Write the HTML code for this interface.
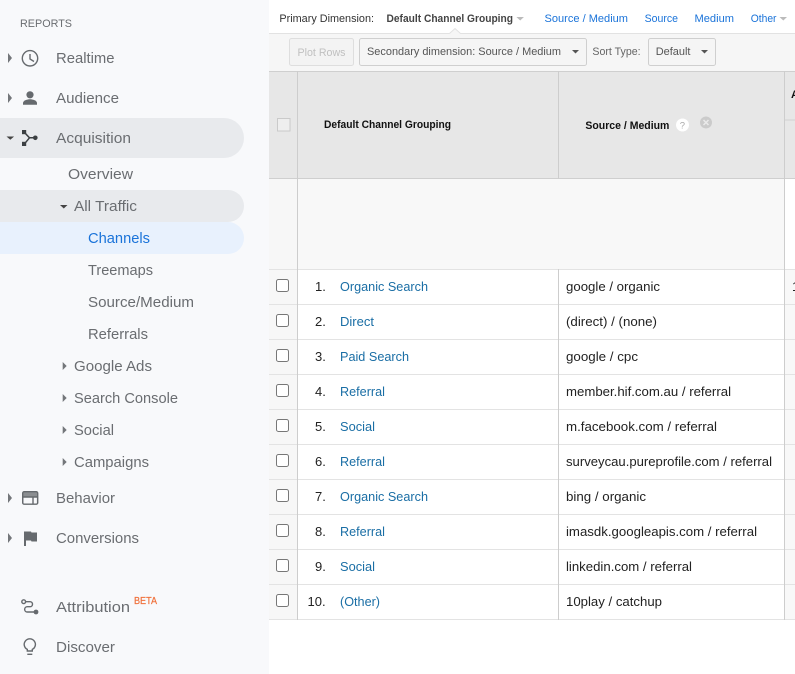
<!DOCTYPE html>
<html>
<head>
<meta charset="utf-8">
<style>
html,body{margin:0;padding:0;background:#fff;width:795px;height:674px;overflow:hidden}
svg{display:block}
text{font-family:"Liberation Sans",sans-serif}
.n{font-size:15px;fill:#6a6d71}
.t{font-size:13px;fill:#222}
.l{font-size:13px;fill:#1a6ea5}
.b{font-size:11px;fill:#111;font-weight:bold}
.d{font-size:11px;fill:#1a73d9}
.s{font-size:11px;fill:#666}
</style>
</head>
<body>
<svg width="795" height="674" viewBox="0 0 795 674" xmlns="http://www.w3.org/2000/svg">
<rect width="795" height="674" fill="#fff"/>
<!-- sidebar -->
<rect width="269" height="674" fill="#f8f9fb"/>
<path d="M0 118H224a20 20 0 0 1 0 40H0z" fill="#e8eaed"/>
<path d="M0 190H228a16 16 0 0 1 0 32H0z" fill="#e8eaed"/>
<path d="M0 222H228a16 16 0 0 1 0 32H0z" fill="#e8f1fd"/>
<text x="20" y="27" font-size="11" fill="#6a6d71" textLength="52" lengthAdjust="spacingAndGlyphs">REPORTS</text>
<text class="n" x="56" y="63" textLength="58.5" lengthAdjust="spacingAndGlyphs">Realtime</text>
<text class="n" x="56" y="103" textLength="63" lengthAdjust="spacingAndGlyphs">Audience</text>
<text class="n" x="56" y="143" textLength="75" lengthAdjust="spacingAndGlyphs">Acquisition</text>
<text class="n" x="68" y="179" textLength="65" lengthAdjust="spacingAndGlyphs">Overview</text>
<text class="n" x="74" y="211" textLength="63" lengthAdjust="spacingAndGlyphs">All Traffic</text>
<text class="n" x="88" y="243" textLength="62" lengthAdjust="spacingAndGlyphs" style="fill:#1a73d9">Channels</text>
<text class="n" x="88" y="275" textLength="65" lengthAdjust="spacingAndGlyphs">Treemaps</text>
<text class="n" x="88" y="307" textLength="106" lengthAdjust="spacingAndGlyphs">Source/Medium</text>
<text class="n" x="88" y="339" textLength="60" lengthAdjust="spacingAndGlyphs">Referrals</text>
<text class="n" x="74" y="371" textLength="78" lengthAdjust="spacingAndGlyphs">Google Ads</text>
<text class="n" x="74" y="403" textLength="104" lengthAdjust="spacingAndGlyphs">Search Console</text>
<text class="n" x="74" y="435" textLength="40" lengthAdjust="spacingAndGlyphs">Social</text>
<text class="n" x="74" y="467" textLength="75" lengthAdjust="spacingAndGlyphs">Campaigns</text>
<text class="n" x="56" y="503" textLength="59" lengthAdjust="spacingAndGlyphs">Behavior</text>
<text class="n" x="56" y="543" textLength="83" lengthAdjust="spacingAndGlyphs">Conversions</text>
<text class="n" x="56" y="612" textLength="74" lengthAdjust="spacingAndGlyphs">Attribution</text>
<text x="134" y="604" font-size="10" fill="#f0703a" stroke="#f0703a" stroke-width=".2" textLength="23" lengthAdjust="spacingAndGlyphs">BETA</text>
<text class="n" x="56" y="652" textLength="59" lengthAdjust="spacingAndGlyphs">Discover</text>
<!-- sidebar carets -->
<g fill="#73767a">
<path d="M8 53l4 5-4 5z"/><path d="M8 93l4 5-4 5z"/>
<path d="M8 493l4 5-4 5z"/><path d="M8 533l4 5-4 5z"/>
<path d="M62.700 362l4 4-4 4z"/><path d="M62.700 394l4 4-4 4z"/><path d="M62.700 426l4 4-4 4z"/><path d="M62.700 458l4 4-4 4z"/>
</g>
<g fill="#444">
<path d="M6.500 136.500h7.600l-3.800 3.300z"/><path d="M60 205h7.500l-3.700 3.500z"/>
</g>
<!-- clock -->
<g fill="none" stroke="#666a6e" stroke-width="1.400">
<circle cx="30" cy="58.300" r="7.700"/><path d="M30 54V59L34 61.500"/>
</g>
<!-- person -->
<g fill="#666a6e"><circle cx="30" cy="94.800" r="3.600"/><path d="M23 104.700v-1.700c0-2.500 4.600-3.700 7-3.700s7 1.200 7 3.700v1.700z"/></g>
<!-- acquisition -->
<g fill="#3c4043"><rect x="22" y="130" width="4.200" height="4.200"/><rect x="22" y="141.800" width="4.200" height="4.200"/><circle cx="35.300" cy="137.800" r="2.300"/></g>
<path d="M24.500 132.500l5 5.300-5 6M29.500 137.800H35" fill="none" stroke="#3c4043" stroke-width="1.500"/>
<!-- behavior -->
<rect x="22.700" y="491.700" width="15" height="12.500" rx="1.500" fill="#8b8e91"/>
<rect x="23.500" y="497.200" width="13.400" height="6.300" fill="#f8f9fb"/>
<g fill="none" stroke="#666a6e" stroke-width="1.400"><rect x="22.700" y="491.700" width="15" height="12.500" rx="1.500"/><path d="M23 497H37.500M33 497V504"/></g>
<!-- flag -->
<path d="M24 531.500h7l.5 1H37v9h-5.500l-.5-1H26V546h-2z" fill="#666a6e"/>
<!-- attribution -->
<g fill="none" stroke="#666a6e" stroke-width="1.400">
<circle cx="23.700" cy="601.700" r="1.900"/>
<path d="M25.700 601.700h4.300a2.500 2.500 0 0 1 0 5h-2.700a2.600 2.600 0 0 0 0 5.300h7"/>
</g>
<circle cx="36" cy="612" r="2.400" fill="#666a6e"/>
<!-- bulb -->
<g fill="none" stroke="#666a6e" stroke-width="1.400">
<path d="M27.300 651v-1.600a5.600 5.600 0 1 1 5 0v1.600z"/>
<path d="M27.300 654.300h5"/>
</g>
<!-- top bar -->
<text x="279.400" y="22" font-size="11" fill="#333" textLength="94.600" lengthAdjust="spacingAndGlyphs">Primary Dimension:</text>
<text x="386.500" y="22" font-size="11" font-weight="bold" fill="#444" textLength="126.500" lengthAdjust="spacingAndGlyphs">Default Channel Grouping</text>
<path d="M516.400 17h7.500l-3.700 3.500z" fill="#bbb"/>
<text class="d" x="544.500" y="22" textLength="83.500" lengthAdjust="spacingAndGlyphs">Source / Medium</text>
<text class="d" x="644.600" y="22" textLength="33.400" lengthAdjust="spacingAndGlyphs">Source</text>
<text class="d" x="694.500" y="22" textLength="39.500" lengthAdjust="spacingAndGlyphs">Medium</text>
<text class="d" x="750.700" y="22" textLength="25.800" lengthAdjust="spacingAndGlyphs">Other</text>
<path d="M779.500 17h7.500l-3.700 3.500z" fill="#bbb"/>
<!-- toolbar -->
<rect x="269" y="33" width="526" height="38" fill="#f6f6f6"/>
<rect x="269" y="33" width="526" height="1" fill="#e2e2e2"/>
<path d="M449.500 34l5.500-5.500 5.500 5.500z" fill="#f6f6f6"/>
<path d="M449.500 33.500l5.500-5 5.500 5" fill="none" stroke="#e2e2e2"/>
<rect x="289.500" y="38.500" width="64" height="27" rx="2" fill="#f3f3f3" stroke="#dedede"/>
<text x="297.500" y="56" font-size="11" fill="#c0c0c0" textLength="48" lengthAdjust="spacingAndGlyphs">Plot Rows</text>
<rect x="359.500" y="38.500" width="227" height="27" rx="2" fill="#f5f5f5" stroke="#cfcfcf"/>
<text class="s" x="367" y="55" textLength="194" lengthAdjust="spacingAndGlyphs" style="fill:#555">Secondary dimension: Source / Medium</text>
<path d="M572 50h7l-3.500 3.500z" fill="#555"/>
<text class="s" x="592.400" y="55" textLength="48.200" lengthAdjust="spacingAndGlyphs">Sort Type:</text>
<rect x="648.500" y="38.500" width="67" height="27" rx="2" fill="#f5f5f5" stroke="#cfcfcf"/>
<text class="s" x="655.700" y="55" textLength="34.800" lengthAdjust="spacingAndGlyphs" style="fill:#555">Default</text>
<path d="M701 50h7l-3.500 3.500z" fill="#555"/>
<!-- table header -->
<rect x="269" y="71" width="526" height="108" fill="#e7e7e7"/>
<rect x="269" y="71" width="526" height="1" fill="#cfcfcf"/>
<rect x="269" y="178" width="526" height="1" fill="#cfcfcf"/>
<rect x="277.500" y="118.500" width="12.500" height="12.500" fill="#eeeeee" stroke="#cacaca"/>
<text class="b" x="324" y="128" textLength="127" lengthAdjust="spacingAndGlyphs">Default Channel Grouping</text>
<text class="b" x="585.400" y="129" textLength="84" lengthAdjust="spacingAndGlyphs">Source / Medium</text>
<circle cx="682.500" cy="125" r="6.500" fill="#fff"/>
<text x="679.800" y="128.500" font-size="9.500" fill="#aaa">?</text>
<circle cx="706" cy="122.500" r="6" fill="#cbcbcb"/>
<path d="M703.500 120l5 5M708.500 120l-5 5" stroke="#eaeaea" stroke-width="1.500"/>
<text x="791" y="98" font-size="11" font-weight="bold" fill="#111">A</text>
<rect x="785" y="119.500" width="10" height="1" fill="#d0d0d0"/>
<!-- summary row -->
<rect x="298" y="179" width="486" height="90" fill="#f8f8f8"/>
<rect x="269" y="179" width="28" height="90" fill="#f7f7f7"/>
<!-- check column / right column tint -->
<rect x="269" y="270" width="28" height="350" fill="#f7f7f7"/>
<rect x="785" y="270" width="10" height="350" fill="#f8f8f8"/>
<g fill="#e3e3e3">
<rect x="269" y="269" width="526" height="1"/><rect x="269" y="304" width="526" height="1"/><rect x="269" y="339" width="526" height="1"/><rect x="269" y="374" width="526" height="1"/><rect x="269" y="409" width="526" height="1"/><rect x="269" y="444" width="526" height="1"/><rect x="269" y="479" width="526" height="1"/><rect x="269" y="514" width="526" height="1"/><rect x="269" y="549" width="526" height="1"/><rect x="269" y="584" width="526" height="1"/><rect x="269" y="619" width="526" height="1"/>
</g>
<!-- column lines -->
<g fill="#cdcdcd">
<rect x="297" y="71" width="1" height="549"/><rect x="558" y="71" width="1" height="108"/><rect x="558" y="269" width="1" height="351"/><rect x="784" y="71" width="1" height="549"/>
</g>
<!-- checkboxes -->
<g fill="#fff" stroke="#777" stroke-width="1">
<rect x="276.500" y="279.500" width="12" height="12" rx="2"/><rect x="276.500" y="314.500" width="12" height="12" rx="2"/><rect x="276.500" y="349.500" width="12" height="12" rx="2"/><rect x="276.500" y="384.500" width="12" height="12" rx="2"/><rect x="276.500" y="419.500" width="12" height="12" rx="2"/><rect x="276.500" y="454.500" width="12" height="12" rx="2"/><rect x="276.500" y="489.500" width="12" height="12" rx="2"/><rect x="276.500" y="524.500" width="12" height="12" rx="2"/><rect x="276.500" y="559.500" width="12" height="12" rx="2"/><rect x="276.500" y="594.500" width="12" height="12" rx="2"/>
</g>
<!-- numbers -->
<text class="t" x="315" y="291">1.</text>
<text class="t" x="315" y="326">2.</text>
<text class="t" x="315" y="361">3.</text>
<text class="t" x="315" y="396">4.</text>
<text class="t" x="315" y="431">5.</text>
<text class="t" x="315" y="466">6.</text>
<text class="t" x="315" y="501">7.</text>
<text class="t" x="315" y="536">8.</text>
<text class="t" x="315" y="571">9.</text>
<text class="t" x="307.500" y="606">10.</text>
<!-- links -->
<text class="l" x="340" y="291" textLength="88" lengthAdjust="spacingAndGlyphs">Organic Search</text>
<text class="l" x="340" y="326" textLength="34" lengthAdjust="spacingAndGlyphs">Direct</text>
<text class="l" x="340" y="361" textLength="69" lengthAdjust="spacingAndGlyphs">Paid Search</text>
<text class="l" x="340" y="396" textLength="45" lengthAdjust="spacingAndGlyphs">Referral</text>
<text class="l" x="340" y="431" textLength="35" lengthAdjust="spacingAndGlyphs">Social</text>
<text class="l" x="340" y="466" textLength="45" lengthAdjust="spacingAndGlyphs">Referral</text>
<text class="l" x="340" y="501" textLength="88" lengthAdjust="spacingAndGlyphs">Organic Search</text>
<text class="l" x="340" y="536" textLength="45" lengthAdjust="spacingAndGlyphs">Referral</text>
<text class="l" x="340" y="571" textLength="35" lengthAdjust="spacingAndGlyphs">Social</text>
<text class="l" x="340" y="606" textLength="40" lengthAdjust="spacingAndGlyphs">(Other)</text>
<!-- source / medium -->
<text class="t" x="566" y="291" textLength="94" lengthAdjust="spacingAndGlyphs">google / organic</text>
<text class="t" x="566" y="326" textLength="91" lengthAdjust="spacingAndGlyphs">(direct) / (none)</text>
<text class="t" x="566" y="361" textLength="72" lengthAdjust="spacingAndGlyphs">google / cpc</text>
<text class="t" x="566" y="396" textLength="165" lengthAdjust="spacingAndGlyphs">member.hif.com.au / referral</text>
<text class="t" x="566" y="431" textLength="151" lengthAdjust="spacingAndGlyphs">m.facebook.com / referral</text>
<text class="t" x="566" y="466" textLength="206" lengthAdjust="spacingAndGlyphs">surveycau.pureprofile.com / referral</text>
<text class="t" x="566" y="501" textLength="80" lengthAdjust="spacingAndGlyphs">bing / organic</text>
<text class="t" x="566" y="536" textLength="191" lengthAdjust="spacingAndGlyphs">imasdk.googleapis.com / referral</text>
<text class="t" x="566" y="571" textLength="126" lengthAdjust="spacingAndGlyphs">linkedin.com / referral</text>
<text class="t" x="566" y="606" textLength="96" lengthAdjust="spacingAndGlyphs">10play / catchup</text>
<text class="t" x="792" y="291">1</text>
</svg>
</body>
</html>
